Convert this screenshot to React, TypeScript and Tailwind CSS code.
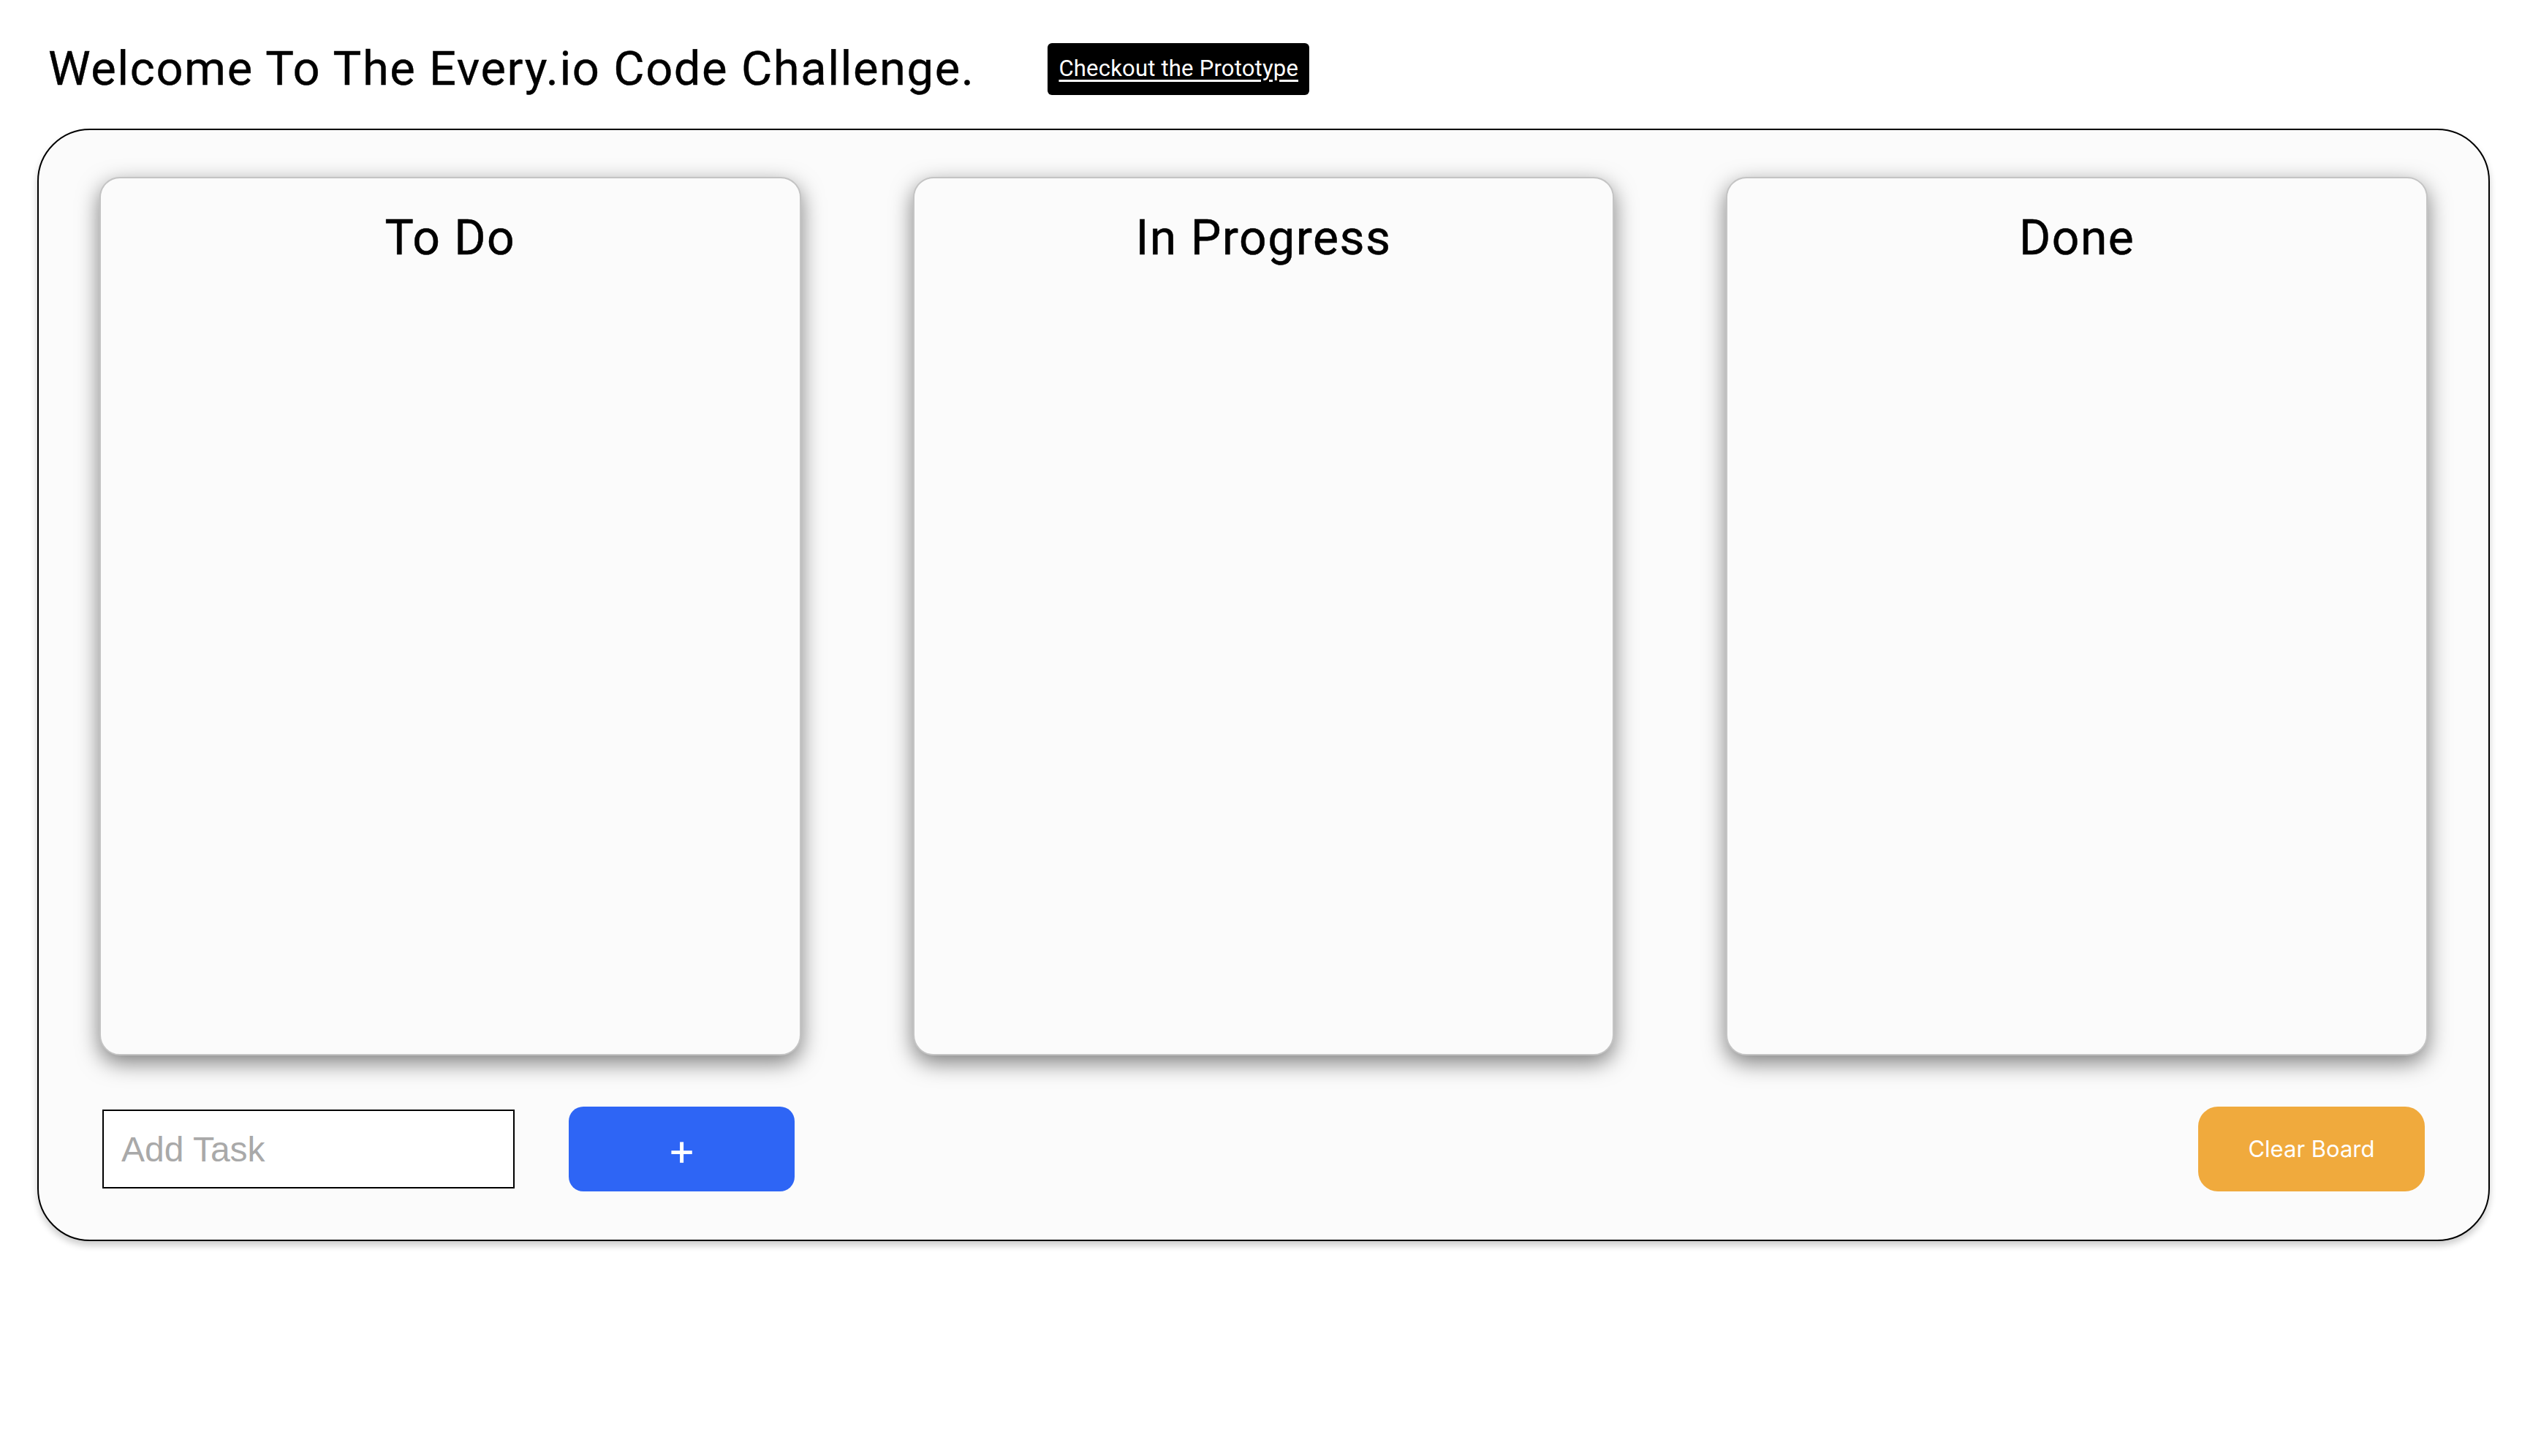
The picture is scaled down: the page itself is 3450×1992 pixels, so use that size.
const columns = ['To Do', 'In Progress', 'Done'];

const Column: React.FC<{ title: string }> = ({ title }) => {
    return (
        <div className="h-[1202px] rounded-[28px] bg-[#fbfbfb] border-2 border-[#c4c4c4] shadow-[0_10px_30px_rgba(0,0,0,0.5)] flex flex-col items-center">
            <h2 className="mt-[34px] text-[66px] font-normal tracking-[1.5px] leading-[96px] text-black font-['Roboto',sans-serif] [-webkit-text-stroke:0.5px_black]">
                {title}
            </h2>
        </div>
    );
};

export default function App() {
    return (
        <div className="min-h-screen bg-white font-['Roboto',sans-serif]">
            <header className="flex items-center pt-[59px] pl-[66px] h-[130px]">
                <h1 className="text-[65px] leading-[71px] font-normal text-black tracking-[1.6px] [-webkit-text-stroke:0.4px_black]">
                    Welcome To The Every.io Code Challenge.
                </h1>
                <a
                    href="#"
                    className="ml-[100px] h-[71px] flex items-center px-[15px] bg-black text-white text-[31px] tracking-[0.2px] underline underline-offset-[5px] rounded-[6px]"
                >
                    Checkout the Prototype
                </a>
            </header>

            <main className="mt-[46px] ml-[51px] mr-[44px] border-2 border-black rounded-[72px] bg-[#fbfbfb] shadow-[0_6px_10px_rgba(0,0,0,0.2)] pt-[64px] px-[83px] pb-[66px]">
                <div className="grid grid-cols-3 gap-[153px]">
                    {columns.map((c) => (
                        <Column key={c} title={c} />
                    ))}
                </div>

                <div className="mt-[70px] flex items-center">
                    <input
                        type="text"
                        placeholder="Add Task"
                        className="ml-[4px] w-[564px] h-[108px] border-2 border-black bg-white pl-[24px] text-[48px] font-['Liberation_Sans',sans-serif] placeholder:text-[#a9a9a9] outline-none"
                    />
                    <button className="ml-[74px] w-[309px] h-[116px] rounded-[20px] bg-[#2e65f5] text-white text-[60px] font-normal leading-none font-['Inter',sans-serif] flex items-center justify-center">
                        +
                    </button>
                    <button className="ml-auto mr-[4px] w-[310px] h-[116px] rounded-[27px] bg-[#f0aa3d] text-white text-[31px] font-['Inter',sans-serif]">
                        Clear Board
                    </button>
                </div>
            </main>
        </div>
    );
}
